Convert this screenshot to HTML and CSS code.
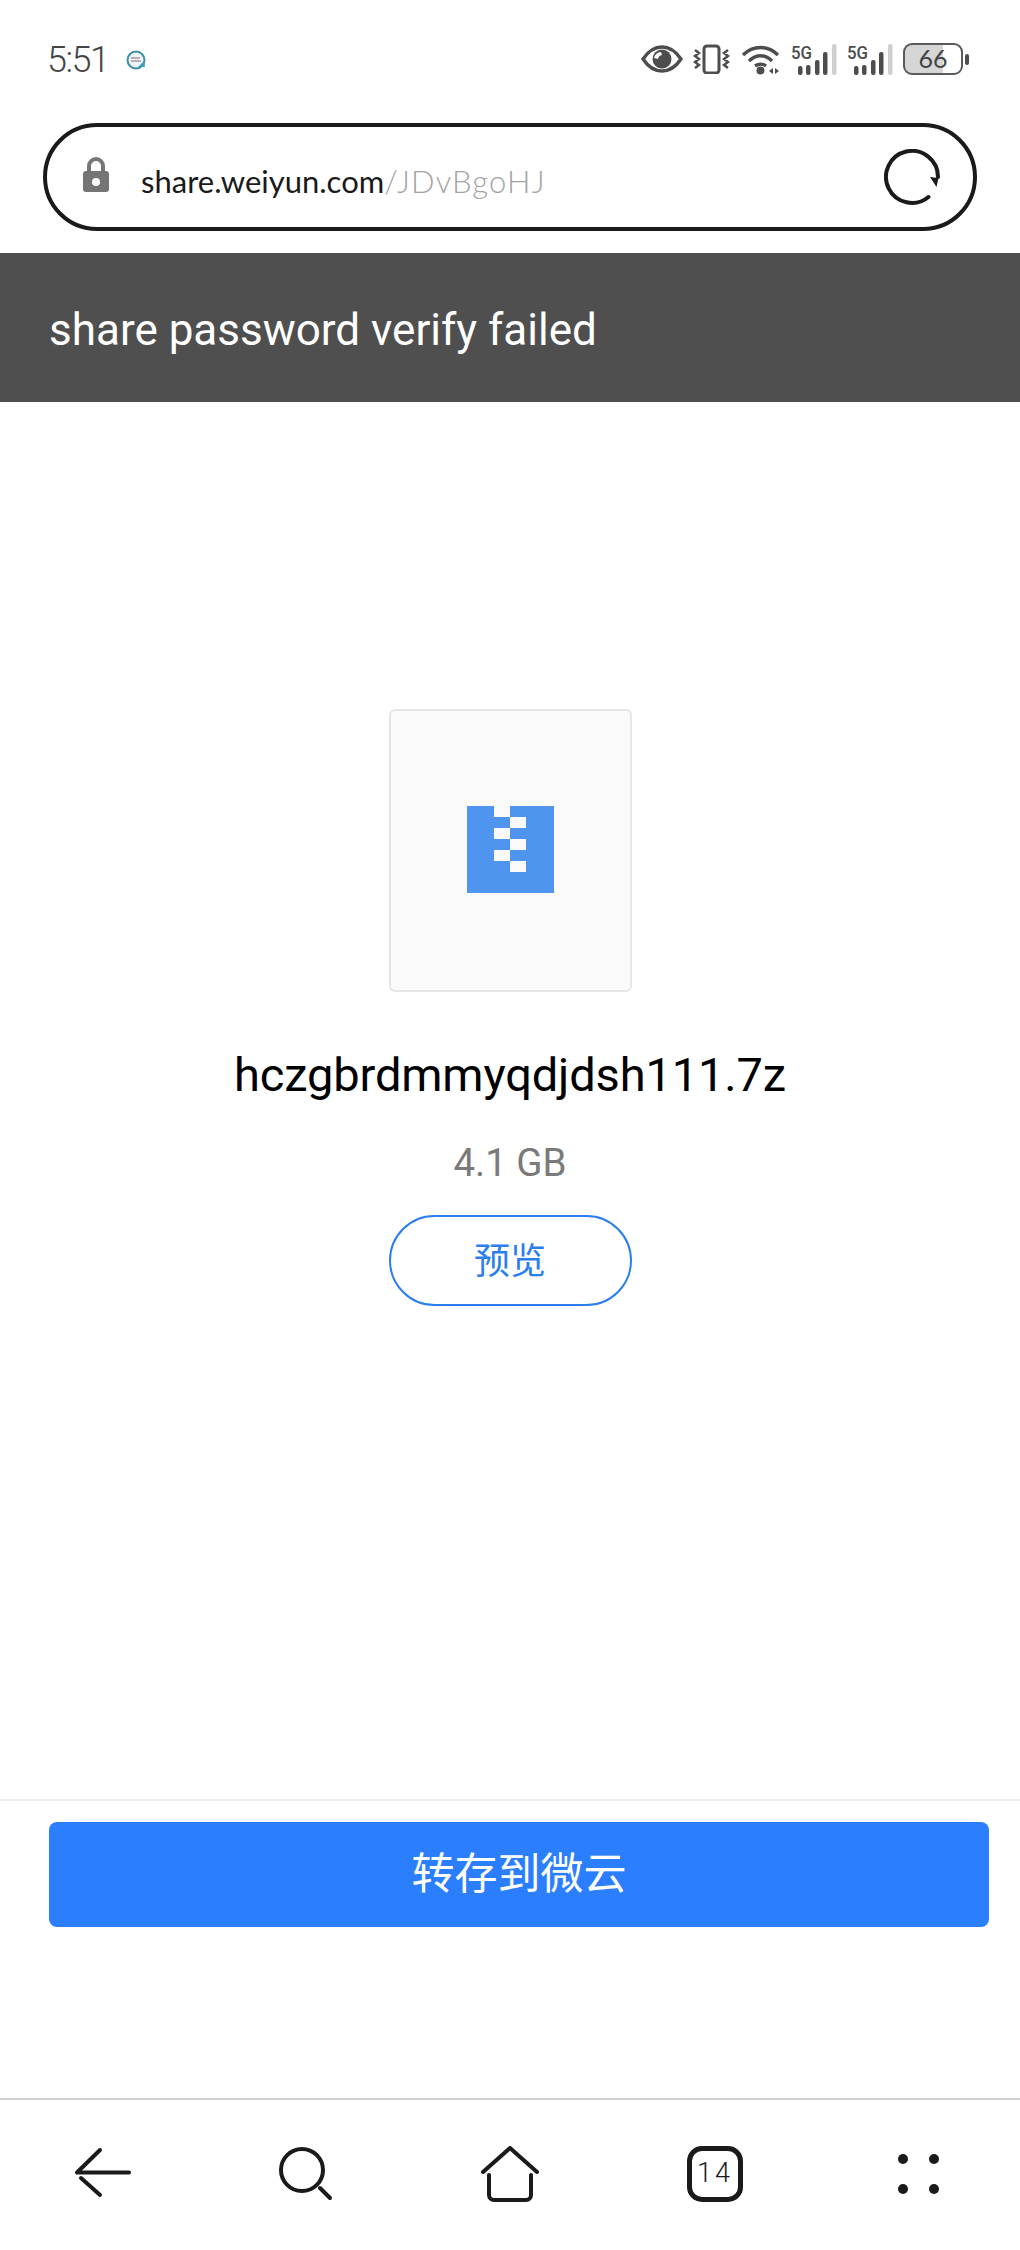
FILE: index.html
```html
<!DOCTYPE html>
<html lang="zh-CN">
<head>
<meta charset="utf-8">
<title>share.weiyun.com</title>
<link rel="stylesheet" href="styles.css">
</head>
<body>
<div class="page">
  <div class="status">
    <span class="time">5:51</span>
    <svg class="app-dot" width="20" height="20" viewBox="0 0 20 20">
      <circle cx="10" cy="10" r="8.500" fill="#eef5f7" stroke="#3f8ea3" stroke-width="2"/>
      <path d="M5 8h9M5 11h10" stroke="#c2aab5" stroke-width="2"/>
      <path d="M12 17l6-6 1 6z" fill="#3f9fc0"/>
    </svg>
    <div class="status-icons">
      <svg width="42" height="30" viewBox="0 0 42 30">
        <path d="M2 15C8 6 14 3 21 3s13 3 19 12c-6 9-12 12-19 12S8 24 2 15z" fill="none" stroke="#4d4d4d" stroke-width="3.400"/>
        <circle cx="21" cy="15" r="9.500" fill="#4d4d4d"/>
        <path d="M13 14a8 8 0 0 1 7-6l1 3a5 5 0 0 0-4 4z" fill="#fff"/>
      </svg>
      <svg width="38" height="30" viewBox="0 0 38 30">
        <rect x="11" y="2" width="15" height="27" rx="3" fill="none" stroke="#4d4d4d" stroke-width="3"/>
        <path d="M2 6l4 3-4 3 4 3-4 3 4 3-4 3M35 6l-4 3 4 3-4 3 4 3-4 3 4 3" fill="none" stroke="#4d4d4d" stroke-width="2.400"/>
      </svg>
      <svg width="40" height="31" viewBox="0 0 40 31">
        <path d="M2 11C12 1 27 1 37 11M8 17c7-7 16-7 23 0M14 22c3.500-2.500 8-2.500 11 0" fill="none" stroke="#4d4d4d" stroke-width="3.400"/>
        <circle cx="19.500" cy="26.500" r="4" fill="#4d4d4d"/>
        <path d="M32 24v6l-4-3zM34 24v6l4-3z" fill="#4d4d4d"/>
      </svg>
      <svg class="signal" width="46" height="39" viewBox="0 -8 46 39">
        <text class="net" x="0" y="15" textLength="21" lengthAdjust="spacingAndGlyphs">5G</text>
        <rect x="7" y="22" width="4.500" height="9" rx="2" fill="#4d4d4d"/>
        <rect x="15" y="21" width="4.500" height="10" rx="2" fill="#4d4d4d"/>
        <rect x="24" y="16" width="4.500" height="15" rx="2" fill="#4d4d4d"/>
        <rect x="32" y="8" width="4.500" height="23" rx="2" fill="#4d4d4d"/>
        <rect x="41" y="0" width="4.500" height="31" rx="2" fill="#cfcfcf"/>
      </svg>
      <svg class="signal" width="46" height="39" viewBox="0 -8 46 39">
        <text class="net" x="0" y="15" textLength="21" lengthAdjust="spacingAndGlyphs">5G</text>
        <rect x="7" y="22" width="4.500" height="9" rx="2" fill="#4d4d4d"/>
        <rect x="15" y="21" width="4.500" height="10" rx="2" fill="#4d4d4d"/>
        <rect x="24" y="16" width="4.500" height="15" rx="2" fill="#4d4d4d"/>
        <rect x="32" y="8" width="4.500" height="23" rx="2" fill="#4d4d4d"/>
        <rect x="41" y="0" width="4.500" height="31" rx="2" fill="#cfcfcf"/>
      </svg>
      <div class="battery-wrap">
        <div class="battery">66</div>
        <span class="nub"></span>
      </div>
    </div>
  </div>

  <div class="urlbar">
    <svg class="lock" width="28" height="36" viewBox="0 0 28 36">
      <path d="M7 15V9a7 7 0 0 1 14 0v6" fill="none" stroke="#757575" stroke-width="4"/>
      <rect x="1" y="14" width="26" height="21" rx="3" fill="#757575"/>
      <circle cx="14" cy="25" r="4" fill="#fff"/>
    </svg>
    <span class="url"><span class="url-host">share.weiyun.com</span><span class="url-path">/JDvBgoHJ</span></span>
    <svg class="reload" width="56" height="56" viewBox="0 0 56 56">
      <path d="M44.500 48A26 26 0 1 1 54 28" fill="none" stroke="#1a1a1a" stroke-width="4" stroke-linecap="round"/>
      <path d="M46 28l8.500 1-2 9z" fill="#1a1a1a"/>
    </svg>
  </div>

  <div class="banner">share password verify failed</div>

  <main class="main">
    <div class="file-card">
      <svg class="zip" width="87" height="87" viewBox="0 0 87 87">
        <rect width="87" height="87" fill="#4f95f0"/>
        <path d="M27 0h16v11H27zM43 11h16v11H43zM27 22h16v11H27zM43 33h16v11H43zM27 44h16v11H27zM43 55h16v11H43z" fill="#fafafa"/>
      </svg>
    </div>
    <div class="file-name">hczgbrdmmyqdjdsh111.7z</div>
    <div class="file-size">4.1 GB</div>
    <button class="preview">预览</button>
  </main>

  <div class="save-area">
    <button class="save">转存到微云</button>
  </div>

  <nav class="nav">
    <svg class="nav-back" width="57" height="51" viewBox="0 0 57 51">
      <path d="M26 3L3 25.500h52M7 31l19 17" fill="none" stroke="#1a1a1a" stroke-width="4" stroke-linecap="round" stroke-linejoin="round"/>
    </svg>
    <svg width="54" height="54" viewBox="0 0 54 54">
      <circle cx="23" cy="23" r="21" fill="none" stroke="#1a1a1a" stroke-width="4"/>
      <path d="M41 41l10 10" stroke="#1a1a1a" stroke-width="4" stroke-linecap="round"/>
    </svg>
    <svg class="nav-home" width="60" height="56" viewBox="0 0 60 56">
      <path d="M3 26L30 2l27 24" fill="none" stroke="#1a1a1a" stroke-width="4" stroke-linecap="round" stroke-linejoin="round"/>
      <path d="M9 29v20a5 5 0 0 0 5 5h32a5 5 0 0 0 5-5V29" fill="none" stroke="#1a1a1a" stroke-width="4" stroke-linecap="round"/>
    </svg>
    <div class="tabs">14</div>
    <svg class="nav-more" width="46" height="46" viewBox="0 0 46 46">
      <circle cx="7" cy="7" r="5" fill="#1a1a1a"/>
      <circle cx="38" cy="7" r="5" fill="#1a1a1a"/>
      <circle cx="7" cy="37" r="5" fill="#1a1a1a"/>
      <circle cx="38" cy="37" r="5" fill="#1a1a1a"/>
    </svg>
  </nav>
</div>
</body>
</html>
```
FILE: styles.css
```css
* { box-sizing: border-box; }
html, body { margin: 0; padding: 0; background: #fff; }
body { font-family: "Roboto", "Noto Sans CJK SC", sans-serif; }
.page { width: 1020px; height: 2250px; display: flex; flex-direction: column; overflow: hidden; }

.status { height: 123px; flex: none; display: flex; align-items: flex-start; padding: 43px 51px 0 47px; }
.time { width: 60px; font-family: "Roboto", sans-serif; font-weight: 300; font-size: 36px; line-height: 34px; letter-spacing: -1.500px; color: #444; white-space: nowrap; }
.app-dot { margin: 7px 0 0 19px; }
.status-icons { margin-left: auto; display: flex; align-items: center; gap: 10px; }
.signal { margin-top: -8px; }
.net { font-family: "Roboto", sans-serif; font-size: 19px; font-weight: 500; fill: #4d4d4d; }
.battery-wrap { display: flex; align-items: center; gap: 2px; }
.battery { width: 60px; height: 32px; border: 2.500px solid #5a5a5a; border-radius: 9px; background: linear-gradient(90deg, #d6d6d6 67%, #fff 67%); font-family: "Lato", sans-serif; font-size: 25px; line-height: 27px; text-align: center; color: #444; }
.nub { width: 4px; height: 11px; border-radius: 2px; background: #4d4d4d; }

.urlbar { flex: none; height: 108px; margin: 0 43px; border: 4px solid #1a1a1a; border-radius: 54px; display: flex; align-items: center; padding: 0 33px 0 35px; }
.lock { flex: none; margin-bottom: 4px; }
.url { margin: 8px 0 0 31px; font-family: "Lato", sans-serif; font-size: 31px; line-height: 40px; white-space: nowrap; }
.url-host { color: #1a1a1a; }
.url-path { color: #a3a3a3; font-weight: 300; letter-spacing: 1.200px; }
.reload { margin-left: auto; flex: none; }

.banner { flex: none; margin-top: 22px; height: 149px; background: #4f4f4f; color: #fff; font-size: 44px; line-height: 155px; padding-left: 49px; }

.main { flex: 1; display: flex; flex-direction: column; align-items: center; padding-top: 307px; }
.file-card { width: 243px; height: 283px; flex: none; border: 2px solid #e6e6e6; border-radius: 6px; background: #fafafa; display: flex; align-items: center; justify-content: center; }
.zip { display: block; margin: -2px -1px 0 0; }
.file-name { margin-top: 53px; font-size: 47px; line-height: 60px; letter-spacing: -0.150px; color: #000; white-space: nowrap; }
.file-size { margin-top: 35px; font-size: 38.500px; line-height: 46px; color: #7a7a7a; }
.preview { margin-top: 29px; width: 243px; height: 91px; border: 2px solid #2b7ef0; border-radius: 46px; background: #fff; color: #2b7ef0; font-family: "Noto Sans CJK SC", sans-serif; font-size: 36px; padding: 0 0 5px; }

.save-area { flex: none; height: 299px; border-top: 2px solid #ececec; padding: 21px 31px 0 49px; }
.save { width: 100%; height: 105px; border: 0; border-radius: 8px; background: #2b7fff; color: #fff; font-family: "Noto Sans CJK SC", sans-serif; font-size: 43px; padding: 0 0 9px; display: block; }

.nav { flex: none; height: 152px; border-top: 2px solid #d0d0d0; display: grid; grid-template-columns: repeat(5, 204px); align-items: start; padding-top: 47px; justify-items: center; }
.nav-home { margin-top: -1px; }
.tabs { width: 56px; height: 56px; margin: -1px 0 0 2px; border: 5px solid #1a1a1a; border-radius: 15px; font-family: "Roboto", sans-serif; font-weight: 300; font-size: 27px; line-height: 44px; letter-spacing: 3px; text-align: center; color: #1a1a1a; }
.nav-more { margin: 5px 0 0 2px; }
```
